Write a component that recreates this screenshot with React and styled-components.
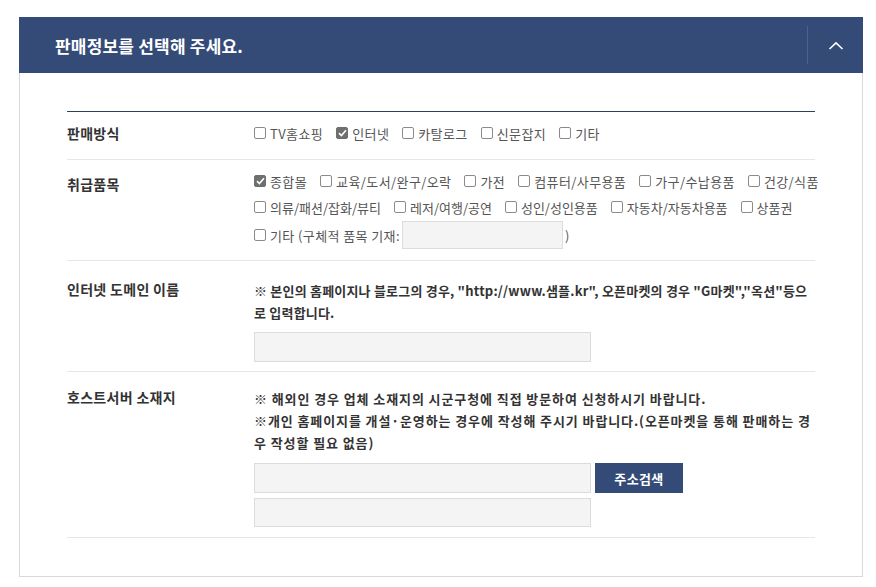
import React from "react";
import styled, { createGlobalStyle } from "styled-components";

const Global = createGlobalStyle`
  html, body { margin: 0; padding: 0; background: #fff; }
  body { font-family: "Noto Sans CJK KR", "Noto Sans", sans-serif; color: #333; }
  * { box-sizing: border-box; }
`;

const NAVY = "#344b78";

const Page = styled.div`
  padding: 17px 13px 0 19px;
`;

const Panel = styled.section`
  width: 844px;
`;

const Header = styled.header`
  height: 56px;
  background: ${NAVY};
  display: flex;
  align-items: center;
`;

const Title = styled.h2`
  flex: 1;
  margin: 0;
  padding-left: 36px;
  color: #fff;
  font-size: 17px;
  font-weight: 700;
  letter-spacing: 0.2px;
`;

const Toggle = styled.button`
  width: 56px;
  height: 38px;
  border: 0;
  border-left: 1px solid #4c628c;
  background: transparent;
  display: flex;
  align-items: center;
  justify-content: center;
  padding: 0;
  cursor: pointer;
`;

const Body = styled.div`
  border: 1px solid #d9d9d9;
  border-top: 0;
  padding: 38px 47px 38px 47px;
`;

const Table = styled.div`
  border-top: 1px solid #2f3f5c;
`;

const Row = styled.div`
  display: grid;
  grid-template-columns: 187px 1fr;
  padding: 8px 0 ${(p) => p.$bottom || 10}px;
  border-bottom: 1px solid #e6e6e6;
`;

const Label = styled.div`
  font-size: 14px;
  font-weight: 700;
  color: #333;
  line-height: 26px;
  padding-top: ${(p) => p.$offset || 0}px;
  letter-spacing: 0.3px;
`;

const Values = styled.div`
  display: flex;
  flex-direction: column;
`;

const Line = styled.div`
  display: flex;
  align-items: center;
  min-height: ${(p) => p.$h || 26}px;
  gap: ${(p) => p.$gap || 13}px;
`;

const Item = styled.label`
  display: inline-flex;
  align-items: center;
  gap: 4px;
  font-size: 13px;
  color: #555;
  white-space: nowrap;
  letter-spacing: ${(p) => (p.$tight ? 0 : 0.4)}px;
`;

const Box = styled.span`
  width: 12px;
  height: 12px;
  border: 1px solid ${(p) => (p.$checked ? "#6f6f6f" : "#8a8a8a")};
  border-radius: 2px;
  background: ${(p) => (p.$checked ? "#6f6f6f" : "#fff")};
  display: inline-flex;
  align-items: center;
  justify-content: center;
  flex: none;
`;

const Note = styled.p`
  margin: ${(p) => p.$top || 0}px 0 0;
  font-size: 13px;
  font-weight: 700;
  color: #333;
  line-height: 22px;
  letter-spacing: ${(p) => p.$spacing ?? 0.9}px;
  word-break: break-all;
`;

const Field = styled.input`
  width: ${(p) => p.$w || 337}px;
  height: ${(p) => p.$h || 30}px;
  border: 1px solid #dcdcdc;
  background: #f4f4f4;
  outline: none;
  padding: 0 8px;
  font: inherit;
`;

const InputRow = styled.div`
  display: flex;
  gap: 4px;
  margin-top: ${(p) => p.$top || 0}px;
`;

const SearchButton = styled.button`
  width: 88px;
  height: 30px;
  border: 0;
  background: ${NAVY};
  color: #fff;
  font-family: inherit;
  font-size: 13px;
  font-weight: 700;
  letter-spacing: 0.4px;
  padding: 0;
`;

const EtcText = styled.span`
  display: inline-flex;
  align-items: center;
  font-size: 13px;
  color: #555;
  letter-spacing: 0.4px;
  white-space: nowrap;
`;

const Check = ({ checked, tight, children }) => (
  <Item $tight={tight}>
    <Box $checked={checked}>
      {checked && (
        <svg width="9" height="8" viewBox="0 0 9 8">
          <path d="M1 4.2 L3.4 6.5 L8 1.3" stroke="#fff" strokeWidth="1.6" fill="none" />
        </svg>
      )}
    </Box>
    {children}
  </Item>
);

const methods = [
  ["TV홈쇼핑", false],
  ["인터넷", true],
  ["카탈로그", false],
  ["신문잡지", false],
  ["기타", false],
];

const itemLines = [
  {
    tight: false,
    gap: 13,
    items: [
      ["종합몰", true],
      ["교육/도서/완구/오락", false],
      ["가전", false],
      ["컴퓨터/사무용품", false],
      ["가구/수납용품", false],
      ["건강/식품", false],
    ],
  },
  {
    tight: true,
    gap: 13,
    items: [
      ["의류/패션/잡화/뷰티", false],
      ["레저/여행/공연", false],
      ["성인/성인용품", false],
      ["자동차/자동차용품", false],
      ["상품권", false],
    ],
  },
];

export default function App() {
  return (
    <Page>
      <Global />
      <Panel>
        <Header>
          <Title>판매정보를 선택해 주세요.</Title>
          <Toggle aria-label="접기">
            <svg width="16" height="9" viewBox="0 0 16 9">
              <path d="M1.5 8 L8 1.8 L14.5 8" stroke="#fff" strokeWidth="1.6" fill="none" />
            </svg>
          </Toggle>
        </Header>
        <Body>
          <Table>
            <Row $bottom={13}>
              <Label>판매방식</Label>
              <Values>
                <Line>
                  {methods.map(([t, c]) => (
                    <Check key={t} checked={c}>{t}</Check>
                  ))}
                </Line>
              </Values>
            </Row>
            <Row>
              <Label $offset={3}>취급품목</Label>
              <Values>
                {itemLines.map((line, i) => (
                  <Line key={i} $gap={line.gap}>
                    {line.items.map(([t, c]) => (
                      <Check key={t} checked={c} tight={line.tight}>{t}</Check>
                    ))}
                  </Line>
                ))}
                <Line $h={30}>
                  <EtcText>
                    <Check>기타 (구체적 품목 기재:</Check>
                    <Field $w={161} $h={28} style={{ marginLeft: 2 }} />
                    <span style={{ marginLeft: 2 }}>)</span>
                  </EtcText>
                </Line>
              </Values>
            </Row>
            <Row $bottom={9}>
              <Label $offset={7}>인터넷 도메인 이름</Label>
              <Values>
                <Note $top={11} $spacing={0.2}>
                  ※ 본인의 홈페이지나 블로그의 경우, "http://www.샘플.kr", 오픈마켓의 경우 "G마켓","옥션"등으로 입력합니다.
                </Note>
                <InputRow $top={8}>
                  <Field />
                </InputRow>
              </Values>
            </Row>
            <Row>
              <Label $offset={4}>호스트서버 소재지</Label>
              <Values>
                <Note $top={8}>
                  ※ 해외인 경우 업체 소재지의 시군구청에 직접 방문하여 신청하시기 바랍니다.
                  <br />
                  ※개인 홈페이지를 개설·운영하는 경우에 작성해 주시기 바랍니다.(오픈마켓을 통해 판매하는 경우 작성할 필요 없음)
                </Note>
                <InputRow $top={9}>
                  <Field />
                  <SearchButton>주소검색</SearchButton>
                </InputRow>
                <InputRow $top={5}>
                  <Field $h={29} />
                </InputRow>
              </Values>
            </Row>
          </Table>
        </Body>
      </Panel>
    </Page>
  );
}
